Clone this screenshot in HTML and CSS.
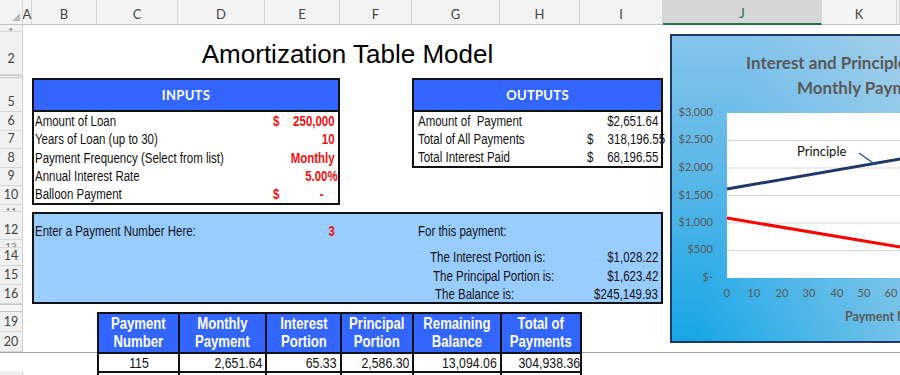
FILE: index.html
```html
<!DOCTYPE html>
<html>
<head>
<meta charset="utf-8">
<link rel="stylesheet" href="styles.css">
</head>
<body>
<div class="sheet">
  <div class="corner"><span class="tri"></span></div>
  <div class="ch">A</div>
  <div class="ch">B</div>
  <div class="ch">C</div>
  <div class="ch">D</div>
  <div class="ch">E</div>
  <div class="ch">F</div>
  <div class="ch">G</div>
  <div class="ch">H</div>
  <div class="ch">I</div>
  <div class="ch ch-sel">J</div>
  <div class="ch">K</div>
  <div class="ch"></div>

  <div class="rh rh-clip">1</div>
  <div class="rh rh-mid">2</div>
  <div class="rh rh-hidden"></div>
  <div class="rh">5</div>
  <div class="rh">6</div>
  <div class="rh">7</div>
  <div class="rh">8</div>
  <div class="rh">9</div>
  <div class="rh">10</div>
  <div class="rh rh-clip">11</div>
  <div class="rh">12</div>
  <div class="rh rh-clip">13</div>
  <div class="rh">14</div>
  <div class="rh">15</div>
  <div class="rh">16</div>
  <div class="rh rh-hidden"></div>
  <div class="rh">19</div>
  <div class="rh">20</div>
  <div class="rh">136</div>
  <div class="rh">137</div>

  <h1 class="title">Amortization Table Model</h1>

  <div class="box inputs">
    <div class="box-head">INPUTS</div>
    <div class="in-row"><span class="lbl nar">Amount of Loan</span><span class="acct red"><span class="nar">$</span><span class="nar nar-r">250,000</span></span></div>
    <div class="in-row"><span class="lbl nar">Years of Loan (up to 30)</span><span class="num nar nar-r red">10</span></div>
    <div class="in-row"><span class="lbl nar">Payment Frequency (Select from list)</span><span class="num nar nar-r red">Monthly</span></div>
    <div class="in-row"><span class="lbl nar">Annual Interest Rate</span><span class="num num-pct nar nar-r red">5.00%</span></div>
    <div class="in-row"><span class="lbl nar">Balloon Payment</span><span class="acct acct-dash red"><span class="nar">$</span><span class="nar nar-r">-</span></span></div>
  </div>

  <div class="box outputs">
    <div class="box-head">OUTPUTS</div>
    <div class="out-row"><span class="lbl-o nar">Amount of&nbsp; Payment</span><span class="num nar nar-r">$2,651.64</span></div>
    <div class="out-row"><span class="lbl-o nar">Total of All Payments</span><span class="acct acct-o"><span class="nar">$</span><span class="nar nar-r">318,196.55</span></span></div>
    <div class="out-row"><span class="lbl-o nar">Total Interest Paid</span><span class="acct acct-o"><span class="nar">$</span><span class="nar nar-r">68,196.55</span></span></div>
  </div>

  <div class="box payment">
    <span class="pay-enter nar">Enter a Payment Number Here:</span>
    <span class="pay-num nar nar-r red">3</span>
    <span class="pay-for nar">For this payment:</span>
    <span class="pay-lbl pay-l1 nar">The Interest Portion is:</span>
    <span class="pay-val pay-v1 nar nar-r">$1,028.22</span>
    <span class="pay-lbl pay-l2 nar">The Principal Portion is:</span>
    <span class="pay-val pay-v2 nar nar-r">$1,623.42</span>
    <span class="pay-lbl pay-l3 nar">The Balance is:</span>
    <span class="pay-val pay-v3 nar nar-r">$245,149.93</span>
  </div>

  <div class="freeze"></div>

  <table class="amort">
    <colgroup>
      <col class="c-c"><col class="c-d"><col class="c-e"><col class="c-f"><col class="c-g"><col class="c-h">
    </colgroup>
    <thead>
      <tr>
        <th><span class="nar nar-c">Payment<br>Number</span></th>
        <th><span class="nar nar-c">Monthly<br>Payment</span></th>
        <th><span class="nar nar-c">Interest<br>Portion</span></th>
        <th><span class="nar nar-c">Principal<br>Portion</span></th>
        <th><span class="nar nar-c">Remaining<br>Balance</span></th>
        <th><span class="nar nar-c">Total of<br>Payments</span></th>
      </tr>
    </thead>
    <tbody>
      <tr>
        <td class="ctr"><span class="nar nar-c">115</span></td>
        <td><span class="nar nar-r">2,651.64</span></td>
        <td><span class="nar nar-r">65.33</span></td>
        <td><span class="nar nar-r">2,586.30</span></td>
        <td><span class="nar nar-r">13,094.06</span></td>
        <td><span class="nar nar-r">304,938.36</span></td>
      </tr>
      <tr>
        <td class="ctr"><span class="nar nar-c">116</span></td>
        <td><span class="nar nar-r">2,651.64</span></td>
        <td><span class="nar nar-r">54.55</span></td>
        <td><span class="nar nar-r">2,597.09</span></td>
        <td><span class="nar nar-r">10,496.97</span></td>
        <td><span class="nar nar-r">307,590.00</span></td>
      </tr>
    </tbody>
  </table>

  <div class="chart">
    <div class="chart-t1">Interest and Principle Portions of</div>
    <div class="chart-t2">Monthly Payments</div>
    <svg class="plot" width="240" height="230" viewBox="0 0 240 230">
      <rect x="55" y="2" width="200" height="165" fill="#ffffff"/>
      <g stroke="#d9d9d9" stroke-width="1">
        <line x1="55" y1="29.5" x2="255" y2="29.5"/>
        <line x1="55" y1="57" x2="255" y2="57"/>
        <line x1="55" y1="84.5" x2="255" y2="84.5"/>
        <line x1="55" y1="112" x2="255" y2="112"/>
        <line x1="55" y1="139.5" x2="255" y2="139.5"/>
      </g>
      <g class="ylab" text-anchor="end">
        <text x="41" y="5">$3,000</text>
        <text x="41" y="32">$2,500</text>
        <text x="41" y="60">$2,000</text>
        <text x="41" y="88">$1,500</text>
        <text x="41" y="115">$1,000</text>
        <text x="41" y="142">$500</text>
        <text x="41" y="170">$-</text>
      </g>
      <g class="xlab" text-anchor="middle">
        <text x="55" y="186">0</text>
        <text x="82" y="186">10</text>
        <text x="110" y="186">20</text>
        <text x="137" y="186">30</text>
        <text x="165" y="186">40</text>
        <text x="192" y="186">50</text>
        <text x="219" y="186">60</text>
        <text x="246" y="186">70</text>
      </g>
      <text class="xtitle" x="173" y="210">Payment Number</text>
      <line x1="55" y1="78" x2="255" y2="43.3" stroke="#1f3864" stroke-width="3"/>
      <line x1="55" y1="107" x2="255" y2="140.5" stroke="#ff0000" stroke-width="3"/>
      <line x1="187" y1="42" x2="204" y2="54" stroke="#2e5597" stroke-width="1.5"/>
      <text class="plabel" x="125" y="44.5">Principle</text>
    </svg>
  </div>
</div>
</body>
</html>
```

FILE: styles.css
```css
html, body {
  margin: 0;
  padding: 0;
}
body {
  width: 900px;
  height: 375px;
  overflow: hidden;
  background: #ffffff;
  font-family: "Liberation Sans", Arial, sans-serif;
  font-size: 14px;
  color: #111111;
}
.sheet {
  position: relative;
  display: grid;
  grid-template-columns: 23px 9px 65px 81px 87px 75px 72px 88px 80px 83px 159px 75px 1fr;
  grid-template-rows: 25px 7px 43px 3px 34px 19px 18px 19px 18px 19px 7px 28px 8px 18px 19px 19px 8px 20px 20px 19px 20px;
  width: 900px;
}

/* narrow text (Arial Narrow look) */
.nar {
  display: inline-block;
  white-space: nowrap;
  transform: scaleX(0.82);
  transform-origin: left center;
}
.nar-r {
  transform-origin: right center;
}
.nar-c {
  transform-origin: center center;
}

/* column headers */
.corner {
  grid-row: 1;
  grid-column: 1;
  background: #f3f3f3;
  border-right: 1px solid #d5d5d5;
  border-bottom: 1px solid #c4c4c4;
  position: relative;
}
.tri {
  position: absolute;
  right: 2px;
  bottom: 3px;
  width: 0;
  height: 0;
  border-left: 8px solid transparent;
  border-bottom: 8px solid #b8b8b8;
}
.ch {
  grid-row: 1;
  box-sizing: border-box;
  background: #f3f3f3;
  border-right: 1px solid #d5d5d5;
  border-bottom: 1px solid #c4c4c4;
  font-family: Lato, "Open Sans", sans-serif;
  font-size: 13px;
  color: #444444;
  display: flex;
  align-items: center;
  justify-content: center;
  padding-top: 3px;
  white-space: nowrap;
}
.ch-sel {
  background: #d6d6d6;
  color: #217346;
  border-bottom: 2px solid #217346;
}

/* row headers */
.rh {
  grid-column: 1;
  box-sizing: border-box;
  background: #f1f1f1;
  border-right: 1px solid #cfcfcf;
  border-bottom: 1px solid #d8d8d8;
  font-family: Lato, "Open Sans", sans-serif;
  font-size: 12.5px;
  line-height: 16px;
  color: #444444;
  display: flex;
  align-items: flex-end;
  justify-content: center;
  overflow: hidden;
  padding-bottom: 1px;
}
.rh-mid {
  padding-bottom: 7px;
}
.rh-clip {
  align-items: flex-start;
  padding: 0;
  line-height: 12px;
  font-size: 10px;
  color: #777777;
}
.rh-hidden {
  border-top: 1px solid #c4c4c4;
  border-bottom: 1px solid #c4c4c4;
  background: #f7f7f7;
}

/* title */
.title {
  grid-column: 3 / 11;
  grid-row: 3;
  align-self: start;
  margin: 7px 0 0 0;
  font-family: "Liberation Sans", Arial, sans-serif;
  font-weight: normal;
  font-size: 26px;
  line-height: 30px;
  text-align: center;
  color: #000000;
}

/* boxes */
.box {
  box-sizing: border-box;
  border: 2px solid #111111;
  background: #ffffff;
}
.box-head {
  height: 30px;
  flex: none;
  background: #3366ff;
  border-bottom: 2px solid #111111;
  color: #ffffff;
  font-family: Lato, "Open Sans", sans-serif;
  font-weight: bold;
  font-size: 13px;
  letter-spacing: 0.3px;
  display: flex;
  align-items: center;
  justify-content: center;
}
.red {
  color: #f21010;
  font-weight: bold;
}
.inputs {
  grid-column: 3 / 7;
  grid-row: 5 / 11;
  display: flex;
  flex-direction: column;
}
.in-row {
  flex: 1;
  display: grid;
  grid-template-columns: 231px 73px;
  align-items: center;
  line-height: 16px;
}
.lbl {
  justify-self: start;
  margin-left: 1px;
}
.acct {
  display: flex;
  justify-content: space-between;
  padding: 0 3px 0 8px;
}
.acct-dash {
  padding-right: 14px;
}
.num {
  justify-self: end;
  margin-right: 3px;
}
.num-pct {
  margin-right: 0;
}

.outputs {
  grid-column: 8 / 11;
  grid-row: 5 / 9;
  display: flex;
  flex-direction: column;
}
.out-row {
  flex: 1;
  display: grid;
  grid-template-columns: 166px 81px;
  align-items: center;
  line-height: 16px;
}
.lbl-o {
  justify-self: start;
  margin-left: 4px;
}
.acct-o {
  padding: 0 3px 0 7px;
}

.payment {
  grid-column: 3 / 11;
  grid-row: 12 / 17;
  background: #99ccff;
  display: grid;
  grid-template-columns: 231px 75px 72px 168px 81px;
  grid-template-rows: 26px 8px 18px 19px 17px;
  line-height: 16px;
}
.pay-enter {
  grid-column: 1;
  grid-row: 1;
  align-self: end;
  justify-self: start;
  margin: 0 0 1px 1px;
}
.pay-num {
  grid-column: 2;
  grid-row: 1;
  align-self: end;
  justify-self: end;
  margin: 0 5px 1px 0;
}
.pay-for {
  grid-column: 4;
  grid-row: 1;
  align-self: end;
  justify-self: start;
  margin: 0 0 1px 6px;
}
.pay-lbl {
  grid-column: 4;
  align-self: center;
  justify-self: start;
}
.pay-val {
  grid-column: 5;
  align-self: center;
  justify-self: end;
  margin-right: 3px;
}
.pay-l1 { grid-row: 3; margin-left: 18px; }
.pay-l2 { grid-row: 4; margin-left: 21px; }
.pay-l3 { grid-row: 5; margin-left: 23px; }
.pay-v1 { grid-row: 3; }
.pay-v2 { grid-row: 4; }
.pay-v3 { grid-row: 5; }

.freeze {
  grid-column: 1 / -1;
  grid-row: 20;
  border-top: 1px solid #9e9e9e;
}

/* amortization table */
.amort {
  grid-column: 4 / 10;
  grid-row: 18 / 22;
  align-self: start;
  width: 100%;
  table-layout: fixed;
  border-collapse: collapse;
}
.c-c { width: 81px; }
.c-d { width: 87px; }
.c-e { width: 75px; }
.c-f { width: 72px; }
.c-g { width: 88px; }
.c-h { width: 80px; }
.amort th {
  background: #3366ff;
  color: #ffffff;
  font-weight: bold;
  font-size: 16px;
  line-height: 18px;
  height: 38px;
  padding: 0;
  border: 2px solid #111111;
  text-align: center;
}
.amort td {
  border: 2px solid #111111;
  height: 17px;
  padding: 0 3px;
  font-size: 15px;
  line-height: 16px;
  text-align: right;
  background: #ffffff;
}
.amort td.ctr {
  text-align: center;
}

/* chart */
.chart {
  position: absolute;
  left: 670px;
  top: 34px;
  width: 260px;
  height: 309px;
  box-sizing: border-box;
  border: 2px solid #1f3864;
  background:
    linear-gradient(100deg, rgba(255,255,255,0) 25%, rgba(215,222,235,0.55) 100%),
    linear-gradient(180deg, #84c4ea 0%, #5ab7e8 45%, #16a6e6 100%);
  font-family: Lato, "Open Sans", sans-serif;
  overflow: hidden;
}
.chart-t1, .chart-t2 {
  font-weight: bold;
  font-size: 17px;
  line-height: 25px;
  color: #595959;
  white-space: nowrap;
}
.chart-t1 {
  padding: 14px 0 0 74px;
}
.chart-t2 {
  padding-left: 125px;
  height: 36px;
}
.plot {
  display: block;
  overflow: visible;
}
.ylab text, .xlab text {
  font-family: Lato, "Open Sans", sans-serif;
  font-size: 11px;
  fill: #595959;
}
.xtitle {
  font-family: Lato, "Open Sans", sans-serif;
  font-size: 12.5px;
  font-weight: bold;
  fill: #595959;
}
.plabel {
  font-family: Lato, "Open Sans", sans-serif;
  font-size: 13px;
  fill: #111111;
}
```
